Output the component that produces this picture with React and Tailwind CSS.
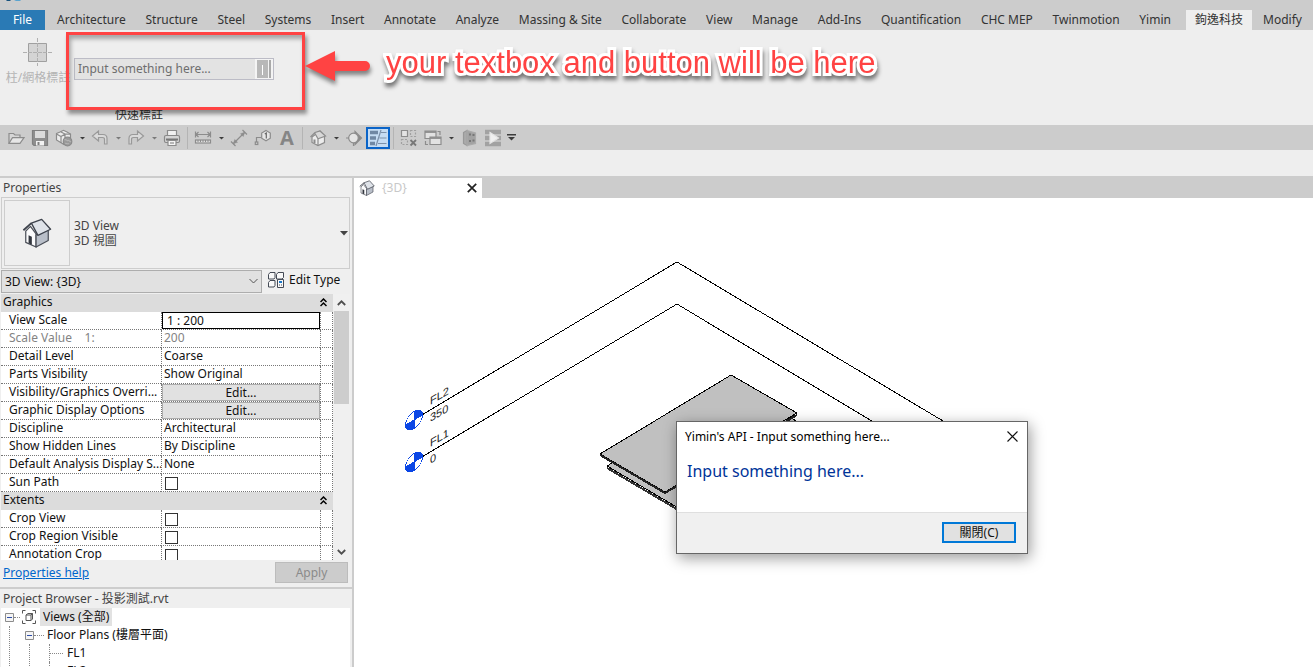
import React from "react";

const TABS = [
  "Architecture", "Structure", "Steel", "Systems", "Insert", "Annotate", "Analyze",
  "Massing & Site", "Collaborate", "View", "Manage", "Add-Ins", "Quantification",
  "CHC MEP", "Twinmotion", "Yimin",
];

const GRAPHICS = [
  { label: "View Scale", kind: "input", value: "1 : 200" },
  { label: "Scale Value    1:", kind: "muted", value: "200" },
  { label: "Detail Level", kind: "text", value: "Coarse" },
  { label: "Parts Visibility", kind: "text", value: "Show Original" },
  { label: "Visibility/Graphics Overri...", kind: "button", value: "Edit..." },
  { label: "Graphic Display Options", kind: "button", value: "Edit..." },
  { label: "Discipline", kind: "text", value: "Architectural" },
  { label: "Show Hidden Lines", kind: "text", value: "By Discipline" },
  { label: "Default Analysis Display S...", kind: "text", value: "None" },
  { label: "Sun Path", kind: "check" },
];

const EXTENTS = [
  { label: "Crop View", kind: "check" },
  { label: "Crop Region Visible", kind: "check" },
  { label: "Annotation Crop", kind: "check" },
];

function Icon({ children, size = 18 }) {
  return (
    <svg width={size} height={size} viewBox="0 0 18 18" fill="none" stroke="#8c8c8c" strokeWidth="1.2" aria-hidden="true">
      {children}
    </svg>
  );
}

const icons = {
  open: (
    <Icon>
      <path d="M2 14V4.500h4.500L8 6h5v2.500" fill="#d6d6d6" />
      <path d="M2 14.300 5.500 8.700H17L13 14.300z" fill="#e6e6e6" />
    </Icon>
  ),
  save: (
    <Icon>
      <path d="M1.500 1.500h15v15H3L1.500 15z" fill="#8f8f8f" stroke="#808080" />
      <path d="M4 2h10v7H4z" fill="#dcdcdc" stroke="none" />
      <path d="M5 12h8v4.500H5z" fill="#f2f2f2" stroke="none" />
      <path d="M6.500 13h2v3h-2z" fill="#808080" stroke="none" />
    </Icon>
  ),
  sync: (
    <Icon>
      <path d="M1.500 4.500 5 3l3.500-1.700L12 3l3.500 2v6L9 15.500 1.500 11z" fill="#ececec" />
      <path d="M1.500 5 6 7.500 10 5l5.500.2M6 7.500V14M10 5 6 3M10 5v5" />
      <circle cx="12.500" cy="12.500" r="4.300" fill="#999" stroke="#8a8a8a" />
      <path d="M9.500 11c2-1.500 2 1.500 3.500.5s1.500 2 3 1M10 14.500c1-1 2 1 4 0" stroke="#b4b4b4" />
    </Icon>
  ),
  undo: (
    <Icon>
      <path d="M1.500 7 7.500 2v3.500H12c3 0 4 1.500 4 4V15h-2.500v-4.500c0-1.500-.7-2-2-2h-4V12z" fill="#dadada" stroke="#999" />
    </Icon>
  ),
  redo: (
    <Icon>
      <path d="M16.500 7 10.500 2v3.500H6c-3 0-4 1.500-4 4V15h2.500v-4.500c0-1.500.7-2 2-2h4V12z" fill="#dadada" stroke="#999" />
    </Icon>
  ),
  print: (
    <Icon>
      <path d="M4.500 7V1.500h9V7" fill="#f0f0f0" />
      <rect x="1.500" y="6.500" width="15" height="7" rx="1.500" fill="#d4d4d4" stroke="#888" />
      <path d="M3 10.500h12" stroke="#777" strokeWidth="2" />
      <path d="M5 11.500h8v5H5z" fill="#f4f4f4" />
      <path d="M7 14h4" />
    </Icon>
  ),
  measure: (
    <Icon>
      <path d="M2 5.500h14M4.500 3 2 5.500 4.500 8M13.500 3 16 5.500 13.500 8M1.500 2.500v6M16.500 2.500v6" />
      <rect x="1.500" y="11" width="15" height="3" fill="#e0e0e0" />
      <path d="M4 11v2M6.500 11v2M9 11v2M11.500 11v2M14 11v2" strokeWidth="1" />
    </Icon>
  ),
  dimension: (
    <Icon>
      <path d="M3.500 14.500 14.500 3.500M12.500 1l4.500 4.500M1 12.500l4.500 4.500" />
      <path d="m3.500 14.500 1.200-4 2.800 2.800zM14.500 3.500l-4 1.200 2.800 2.800z" fill="#8c8c8c" strokeWidth=".5" />
    </Icon>
  ),
  tag: (
    <Icon>
      <path d="M2.500 13V8.500H7" />
      <rect x="1.300" y="13" width="2.500" height="2.500" />
      <path d="m12 1.500 4.300 2.500v5.200L12 11.700 7.700 9.200V4z" fill="#e6e6e6" />
      <path d="m10.800 5 1.500-1v5.500" stroke="#666" />
    </Icon>
  ),
  house: (
    <Icon>
      <path d="M3 8v5.500l6 3 6.500-3V7L11 2z" fill="#ececec" />
      <path d="M1.500 8 6 3.500 11 2l5.500 5L9 9.700 6 4.500M9 9.500v7" fill="#d8d8d8" />
      <path d="M5.500 10.500v3.500" strokeWidth="2" />
    </Icon>
  ),
  section: (
    <Icon>
      <path d="m10 2.500 6.500 6.500-6.500 6.500z" fill="#888" />
      <circle cx="8.500" cy="9" r="4.800" fill="#e4e4e4" />
      <path d="M1 9h3M8.500 14v3" />
    </Icon>
  ),
  thin: (
    <Icon>
      <path d="M1 3.500h8M1 9h6M1 14.500h5" stroke="#7088a4" strokeWidth="3.500" />
      <path d="M12 1 7 17M12 3.500h5.500M10.500 9h7M9 14.500h8.500" stroke="#7c91aa" />
    </Icon>
  ),
  closeHidden: (
    <Icon>
      <path d="M1.500 1.500h6v6h-6z" fill="#e4e4e4" />
      <path d="M10.500 1.500h5v6h-5zM1.500 10.500h6v5h-6z" strokeDasharray="2 1.500" stroke="#a0a0a0" />
      <path d="m10.500 11 5.500 5.500M16 11l-5.500 5.500" stroke="#777" strokeWidth="1.800" />
    </Icon>
  ),
  switchWin: (
    <Icon>
      <path d="M1 2h11v7.500H1z" fill="#e2e2e2" />
      <path d="M1 3h11" strokeWidth="1.800" />
      <path d="M6 8h11v7.500H6z" fill="#e2e2e2" />
      <path d="M6 9h11" strokeWidth="1.800" />
      <path d="M13.500 2.500H16V6M1.500 12v3.500H4" />
    </Icon>
  ),
  panel: (
    <Icon>
      <path d="M3.500 3.500 7 1.500v15l-3.500-2z" fill="#aaa" stroke="#999" />
      <path d="m7 1.500 8.500 2.500v10.500L7 16.500z" fill="#a2a2a2" stroke="#aaa" />
      <path d="M9 5.500h2M12.500 6h2M9 12h2M12.500 11.500h2" stroke="#777" strokeWidth="2" />
    </Icon>
  ),
  run: (
    <Icon>
      <path d="M1 3h16M1 9h16M1 15h16" stroke="#a2a2a2" strokeWidth="4.500" />
      <path d="M6 3.500 14.500 9 6 14.500z" fill="#f0f0f0" stroke="#e4e4e4" />
    </Icon>
  ),
};

function Tool({ name, label, active }) {
  return (
    <button
      type="button"
      aria-label={label}
      className={
        active
          ? "flex h-[22px] w-6 items-center justify-center border-2 border-[#0a64c8] bg-[#c5dcf3]"
          : "flex h-[22px] w-6 items-center justify-center"
      }
    >
      {icons[name]}
    </button>
  );
}

function Caret({ label, faded, bar }) {
  return (
    <button type="button" aria-label={label} className="flex h-[22px] w-3 items-center justify-center">
      <svg width="9" height="8" viewBox="0 0 9 8" fill={faded ? "#7a7a7a" : "#3c3c3c"} aria-hidden="true">
        {bar && <path d="M0 0h9v1.500H0z" />}
        <path d={bar ? "M1 3h7L4.500 6.500z" : "M2 3h5L4.500 5.500z"} />
      </svg>
    </button>
  );
}

function Sep() {
  return <span className="mx-[3px] h-[22px] w-px bg-[#b4b4b4]" />;
}

function House({ size }) {
  return (
    <svg width={size} height={size} viewBox="0 0 32 32" strokeLinejoin="round" aria-hidden="true">
      <path d="M4 14v12l11 5V17L9 9z" fill="#fbfbfc" stroke="#4a4e57" strokeWidth="1.300" />
      <path d="M15 18v13l13-7V12z" fill="#b9bfc9" stroke="#4a4e57" strokeWidth="1.300" />
      <path d="M7 18.500 10.500 20v8.500L7 27z" fill="#33373f" />
      <path d="M10 5.500 21 1.500 30.500 12 17 18.500z" fill="#dfe3e9" stroke="#3d424c" strokeWidth="1.400" />
      <path d="M1.500 13 10 5.500" fill="none" stroke="#3d424c" strokeWidth="2" />
    </svg>
  );
}

function Collapse() {
  return (
    <svg width="7" height="9" viewBox="0 0 7 9" fill="none" stroke="#000" strokeWidth="1.500" aria-hidden="true">
      <path d="m.5 4 3-3 3 3M.5 8l3-3 3 3" />
    </svg>
  );
}

function GroupHeader({ title }) {
  return (
    <tr className="h-[18px] bg-[#dcdcdc]">
      <th colSpan={3} className="p-0 text-left align-top font-normal">
        <button type="button" className="flex w-full items-center justify-between pr-[6px] pl-[2px] leading-4">
          {title}
          <Collapse />
        </button>
      </th>
    </tr>
  );
}

function Value({ row, id }) {
  if (row.kind === "input")
    return <input id={id} defaultValue={row.value} className="block h-[17px] w-full border border-black bg-white px-1 outline-1 -outline-offset-1 outline-black" />;
  if (row.kind === "button")
    return (
      <button id={id} type="button" className="block h-[17px] w-full border border-[#adadad] bg-[#e1e1e1] leading-[15px]">
        {row.value}
      </button>
    );
  if (row.kind === "check")
    return <input id={id} type="checkbox" className="mt-[3px] ml-[3px] block size-[13px] appearance-none border border-[#333] bg-white" />;
  return <span id={id} className="block px-[2px]">{row.value}</span>;
}

function Row({ row }) {
  const id = "prop-" + row.label.replace(/[^a-z]/gi, "").toLowerCase();
  const muted = row.kind === "muted";
  return (
    <tr className={muted ? "h-[18px] text-[#838383]" : "h-[18px]"}>
      <td className="overflow-hidden border-b border-dotted border-[#777] p-0 pl-2 align-top leading-[15px] whitespace-pre">
        <label htmlFor={id}>{row.label}</label>
      </td>
      <td className="overflow-hidden border-b border-l border-dotted border-[#777] p-0 align-top leading-[15px]">
        <Value row={row} id={id} />
      </td>
      <td className="border-x border-b border-dotted border-[#777] p-0" />
    </tr>
  );
}

function Properties() {
  return (
    <section className="flex shrink-0 flex-col bg-[#efefef]">
      <h2 className="h-[19px] px-[3px] leading-[19px] text-[#444]">Properties</h2>
      <div className="mr-[2px] ml-px flex items-center border border-[#cdcdcd] p-[2px] pr-px">
        <div className="flex size-[66px] items-center justify-center border border-[#cdcdcd]">
          <House size={30} />
        </div>
        <div className="ml-1 flex-1 leading-[15px] text-[#444]">
          <p>3D View</p>
          <p>3D 視圖</p>
        </div>
        <button type="button" aria-label="Change type">
          <svg width="8" height="5" viewBox="0 0 8 5" fill="#444" aria-hidden="true"><path d="M0 0h8L4 4.500z" /></svg>
        </button>
      </div>
      <div className="mr-[2px] mb-px ml-px flex items-center pt-px">
        <div className="relative w-[261px]">
          <select aria-label="Element filter" className="h-[23px] w-full appearance-none border border-[#adadad] bg-[#e1e1e1] px-[3px]">
            <option>3D View: {"{3D}"}</option>
          </select>
          <svg className="pointer-events-none absolute top-2 right-1" width="9" height="7" viewBox="0 0 9 7" fill="none" stroke="#555" aria-hidden="true">
            <path d="m.5 1 4 4 4-4" />
          </svg>
        </div>
        <button type="button" className="flex flex-1 items-center gap-[5px] pb-[3px] pl-[6px] whitespace-nowrap">
          <svg width="16" height="16" viewBox="0 0 16 16" fill="#f8f8f8" stroke="#444a55" aria-hidden="true">
            <path d="M.5 2.500 2 .5h5v5L6 7H.5zM8.500 2.500 10 .5h5.500v5L14 7H8.500zM.5 10.500 2 8.500h5v5L6 15H.5z" />
            <path d="M9.500 7.500h6v8h-6z" />
            <path d="M11 10h3" stroke="#1976c8" strokeWidth="2" />
            <path d="M11 13h1M13 13h1" />
          </svg>
          Edit Type
        </button>
      </div>
      <div className="mr-[2px] ml-px flex h-[266px] overflow-hidden">
        <div className="h-full flex-1 overflow-hidden bg-white">
          <table className="w-full table-fixed border-separate border-spacing-0">
            <colgroup>
              <col />
              <col className="w-[159px]" />
              <col className="w-[13px]" />
            </colgroup>
            <tbody>
              <GroupHeader title="Graphics" />
              {GRAPHICS.map((r) => <Row key={r.label} row={r} />)}
              <GroupHeader title="Extents" />
              {EXTENTS.map((r) => <Row key={r.label} row={r} />)}
            </tbody>
          </table>
        </div>
        <div className="flex w-[17px] flex-col items-center bg-[#f0f0f0]">
          <svg className="mt-[6px] mb-[5px]" width="9" height="6" viewBox="0 0 9 6" fill="none" stroke="#505050" strokeWidth="1.800" aria-hidden="true"><path d="m.8 5 3.700-3.700L8.200 5" /></svg>
          <div className="h-[93px] w-[15px] bg-[#cdcdcd]" />
          <svg className="mt-auto mb-[5px]" width="9" height="6" viewBox="0 0 9 6" fill="none" stroke="#505050" strokeWidth="1.800" aria-hidden="true"><path d="m.8 1 3.700 3.700L8.200 1" /></svg>
        </div>
      </div>
      <div className="flex h-[27px] items-center justify-between pr-1 pb-[2px] pl-[3px]">
        <a href="#help" className="text-[#0066cc] underline">Properties help</a>
        <button type="button" className="h-[21px] w-[73px] border border-[#bcbcbc] bg-[#cccccc] text-[#8a8a8a]">Apply</button>
      </div>
    </section>
  );
}

function Minus() {
  return (
    <svg width="9" height="9" viewBox="0 0 9 9" fill="#f5f5f5" stroke="#8c8c8c" className="shrink-0" aria-hidden="true">
      <path d="M.5.5h8v8h-8z" />
      <path d="M2 4.500h5" stroke="#2f4fa8" />
    </svg>
  );
}

function Browser() {
  return (
    <section className="flex min-h-0 flex-1 flex-col overflow-hidden border-t-2 border-[#cdcdcd] bg-[#efefef]">
      <h2 className="h-[19px] shrink-0 px-[3px] leading-[19px] text-[#444]">Project Browser - 投影測試.rvt</h2>
      <ul className="mr-[2px] ml-px flex-1 overflow-hidden bg-white pl-1 leading-[18px]">
        <li>
          <div className="flex h-[18px] items-center">
            <Minus />
            <span className="w-[6px] border-t border-dotted border-[#888]" />
            <svg className="mr-1 ml-[2px]" width="14" height="14" viewBox="0 0 14 14" fill="none" stroke="#555" aria-hidden="true">
              <path d="M.5 3.500v-3h3M10.500.5h3v3M13.500 10.500v3h-3M3.500 13.500h-3v-3M4 5l2-1.500h4.500V9L9 10.500H4zM4 5h5v5.500M9 5l1.500-1.500" />
            </svg>
            <span className="bg-[#e2e2e2] px-[3px]">Views (全部)</span>
          </div>
          <ul className="ml-1 border-l border-dotted border-[#888] pl-[15px]">
            <li>
              <div className="flex h-[18px] items-center">
                <Minus />
                <span className="mr-[3px] w-[10px] border-t border-dotted border-[#888]" />
                Floor Plans (樓層平面)
              </div>
              <ul className="ml-1 border-l border-dotted border-[#888] pl-[19px]">
                {["FL1", "FL2"].map((n) => (
                  <li key={n} className="flex h-[18px] items-center border-l border-dotted border-[#888]">
                    <span className="mr-1 w-[13px] border-t border-dotted border-[#888]" />
                    {n}
                  </li>
                ))}
              </ul>
            </li>
          </ul>
        </li>
      </ul>
    </section>
  );
}

function LevelMark({ x, y, name, elevation }) {
  return (
    <g>
      <g transform={`translate(${x} ${y}) skewY(-30)`} fill="#0a46e6" stroke="#0a46e6">
        <circle r="8.500" fill="#fff" />
        <path d="M0 0V-8.500A8.500 8.500 0 0 1 8.500 0zM0 0V8.500A8.500 8.500 0 0 1-8.500 0z" />
      </g>
      <g className="font-['Liberation_Sans',sans-serif]" fontSize="11" fill="#222" stroke="none">
        <text transform={`translate(${x + 16} ${y - 15}) skewY(-30)`}>{name}</text>
        <text transform={`translate(${x + 16} ${y + 2}) skewY(-30)`}>{elevation}</text>
      </g>
    </g>
  );
}

function Model() {
  return (
    <svg width="959" height="469" viewBox="354 198 959 469" fill="none" stroke="#000" shapeRendering="crispEdges" role="img" aria-label="3D model view">
      <path d="M422 415 677 262 1020 467M422 457 677 304 980 486" />
      <path d="M607 466 738 388 812 430 680 509z" fill="#c0c0c0" />
      <path d="M607 468 680 511" stroke="#333" strokeWidth="2" />
      <path d="M600 454 731 375 797 413 665 492z" fill="#c0c0c0" />
      <path d="M600 455 665 493 797 415" stroke="#222" strokeWidth="2" />
      <LevelMark x={414} y={420} name="FL2" elevation="350" />
      <LevelMark x={414} y={462} name="FL1" elevation="0" />
    </svg>
  );
}

function Dialog() {
  return (
    <div role="dialog" aria-labelledby="dialog-title" className="absolute top-[223px] left-[322px] flex h-[133px] w-[352px] flex-col border border-[#666] bg-white shadow-[2px_4px_14px_rgba(0,0,0,0.4)]">
      <div className="flex h-[29px] items-center justify-between pr-[9px] pl-2">
        <h2 id="dialog-title" className="text-black">Yimin's API - Input something here...</h2>
        <button type="button" aria-label="Close dialog">
          <svg width="11" height="11" viewBox="0 0 11 11" stroke="#111" strokeWidth="1.100" aria-hidden="true"><path d="m.5.500 10 10M10.500.500l-10 10" /></svg>
        </button>
      </div>
      <p className="px-[10px] pt-2 text-[16px] leading-6 text-[#003399]">Input something here...</p>
      <div className="mt-auto flex h-[41px] items-center justify-end border-t border-[#dfdfdf] bg-[#f0f0f0] pr-[11px] pb-[2px]">
        <button type="button" className="h-[21px] w-[74px] border-2 border-[#0078d7] bg-[#e1e1e1] leading-[17px]">關閉(C)</button>
      </div>
    </div>
  );
}

export default function App() {
  return (
    <div className="flex h-screen flex-col overflow-hidden bg-[#eeeeee] font-['Noto_Sans','Noto_Sans_CJK_TC',sans-serif] text-[12px] text-[#111]">
      <div className="h-[10px] shrink-0 bg-[#cccccc]">
        <svg width="24" height="2" viewBox="0 0 24 2" aria-hidden="true">
          <path d="M6 0h4l1 1H7z" fill="#17527e" />
          <path d="M14 0h7l-1 1h-4z" fill="#5ba4cf" />
        </svg>
      </div>
      <nav className="flex h-5 shrink-0 items-stretch bg-[#cccccc] text-[#333]">
        <button type="button" className="w-[45px] bg-[#2a7ab5] text-white">File</button>
        <div className="flex flex-1 items-center justify-between pr-[15px] pl-3 whitespace-nowrap">
          {TABS.map((t) => <button type="button" key={t}>{t}</button>)}
        </div>
        <button type="button" className="w-[66px] bg-[#eeeeee]">鉤逸科技</button>
        <button type="button" className="w-[61px]">Modify</button>
      </nav>

      <header className="relative flex h-[95px] shrink-0 flex-col">
        <div className="flex flex-1">
          <button type="button" className="flex w-[74px] shrink-0 flex-col items-center pt-2 pl-[2px] text-[#b4b4b4]">
            <svg width="30" height="28" viewBox="0 0 30 28" fill="none" stroke="#a0a0a0" aria-hidden="true">
              <path d="M5.500 5.500h18v18h-18z" fill="#d4d4d4" />
              <path d="M14.500 0v28M0 14.500h30" stroke="#b0b0b0" strokeDasharray="4 1" />
            </svg>
            <span className="leading-6 whitespace-nowrap">柱/網格標註</span>
          </button>
          <div className="mt-7 flex h-[22px] w-[200px] border border-[#bcbcc6] bg-[#e3e3e3]">
            <input aria-label="Text to show" defaultValue="Input something here..." className="min-w-0 flex-1 bg-transparent px-[3px] text-[#6e6e6e]" />
            <button type="button" aria-label="Run" className="flex w-[18px] items-center bg-[#f4f4f4] pl-[2px]">
              <svg width="15" height="18" viewBox="0 0 15 18" aria-hidden="true">
                <path d="M0 0h11v18H0z" fill="#b8b8b8" />
                <path d="M5 5h1v10H5z" fill="#fff" />
                <path d="M12 0h2v18h-2z" fill="#aaa" />
              </svg>
            </button>
          </div>
        </div>
        <p className="h-5 w-[278px] text-center leading-5 text-[#333]">快速標註</p>

        <div className="absolute top-[2px] left-[66px] h-[78px] w-[239px] border-3 border-[#ff4343] shadow-[2px_4px_4px_rgba(0,0,0,0.4),inset_2px_4px_4px_rgba(0,0,0,0.3)]" />
        <svg className="absolute top-[18px] left-[305px] drop-shadow-[1px_4px_2px_rgba(0,0,0,0.45)]" width="68" height="36" viewBox="0 0 68 36" fill="#ff4343" aria-hidden="true">
          <path d="M0 18 30 3V13H60a5 5 0 0 1 0 10H30V33z" />
        </svg>
        <p className="absolute top-[15px] left-[386px] font-['Liberation_Sans',sans-serif] text-[31px] leading-9 whitespace-nowrap text-[#ff4343] [-webkit-text-stroke:6px_#fff] [paint-order:stroke_fill] drop-shadow-[1px_4px_2px_rgba(0,0,0,0.5)] [stroke-linejoin:round]">
          your textbox and button will be here
        </p>
      </header>

      <div role="toolbar" aria-label="Quick access" className="flex h-[25px] shrink-0 items-center bg-[#cccccc] pl-1">
        <Tool name="open" label="Open" />
        <Tool name="save" label="Save" />
        <Tool name="sync" label="Synchronize" />
        <Caret label="Synchronize options" />
        <Tool name="undo" label="Undo" />
        <Caret label="Undo history" faded />
        <Tool name="redo" label="Redo" />
        <Caret label="Redo history" faded />
        <Tool name="print" label="Print" />
        <Sep />
        <Tool name="measure" label="Measure" />
        <Caret label="Measure options" />
        <Tool name="dimension" label="Aligned dimension" />
        <Tool name="tag" label="Tag by category" />
        <button type="button" aria-label="Text" className="h-[22px] w-6 font-['Open_Sans',sans-serif] text-[20px] leading-[22px] font-bold text-[#858585]">A</button>
        <Sep />
        <Tool name="house" label="Default 3D view" />
        <Caret label="3D view options" />
        <Tool name="section" label="Section" />
        <Tool name="thin" label="Thin lines" active />
        <Sep />
        <Tool name="closeHidden" label="Close inactive views" />
        <Tool name="switchWin" label="Switch windows" />
        <Caret label="Window list" />
        <Tool name="panel" label="Panel" />
        <Tool name="run" label="Play" />
        <Caret label="Customize toolbar" bar />
      </div>

      <div className="h-[28px] shrink-0 border-b-2 border-[#cccccc]" />

      <main className="flex min-h-0 flex-1">
        <aside className="flex w-[354px] shrink-0 flex-col border-r-2 border-[#cccccc]">
          <Properties />
          <Browser />
        </aside>
        <div className="flex min-w-0 flex-1 flex-col">
          <div className="flex h-5 shrink-0 bg-[#cccccc]">
            <div className="flex w-32 items-center bg-white px-[5px]">
              <House size={16} />
              <span className="ml-[7px] flex-1 text-[#c8c8c8]">{"{3D}"}</span>
              <button type="button" aria-label="Close view">
                <svg width="10" height="10" viewBox="0 0 10 10" stroke="#222" strokeWidth="1.700" aria-hidden="true"><path d="m.8.800 8.400 8.400M9.200.800.800 9.200" /></svg>
              </button>
            </div>
          </div>
          <div className="relative min-h-0 flex-1 overflow-hidden bg-white">
            <Model />
            <Dialog />
          </div>
        </div>
      </main>
    </div>
  );
}
